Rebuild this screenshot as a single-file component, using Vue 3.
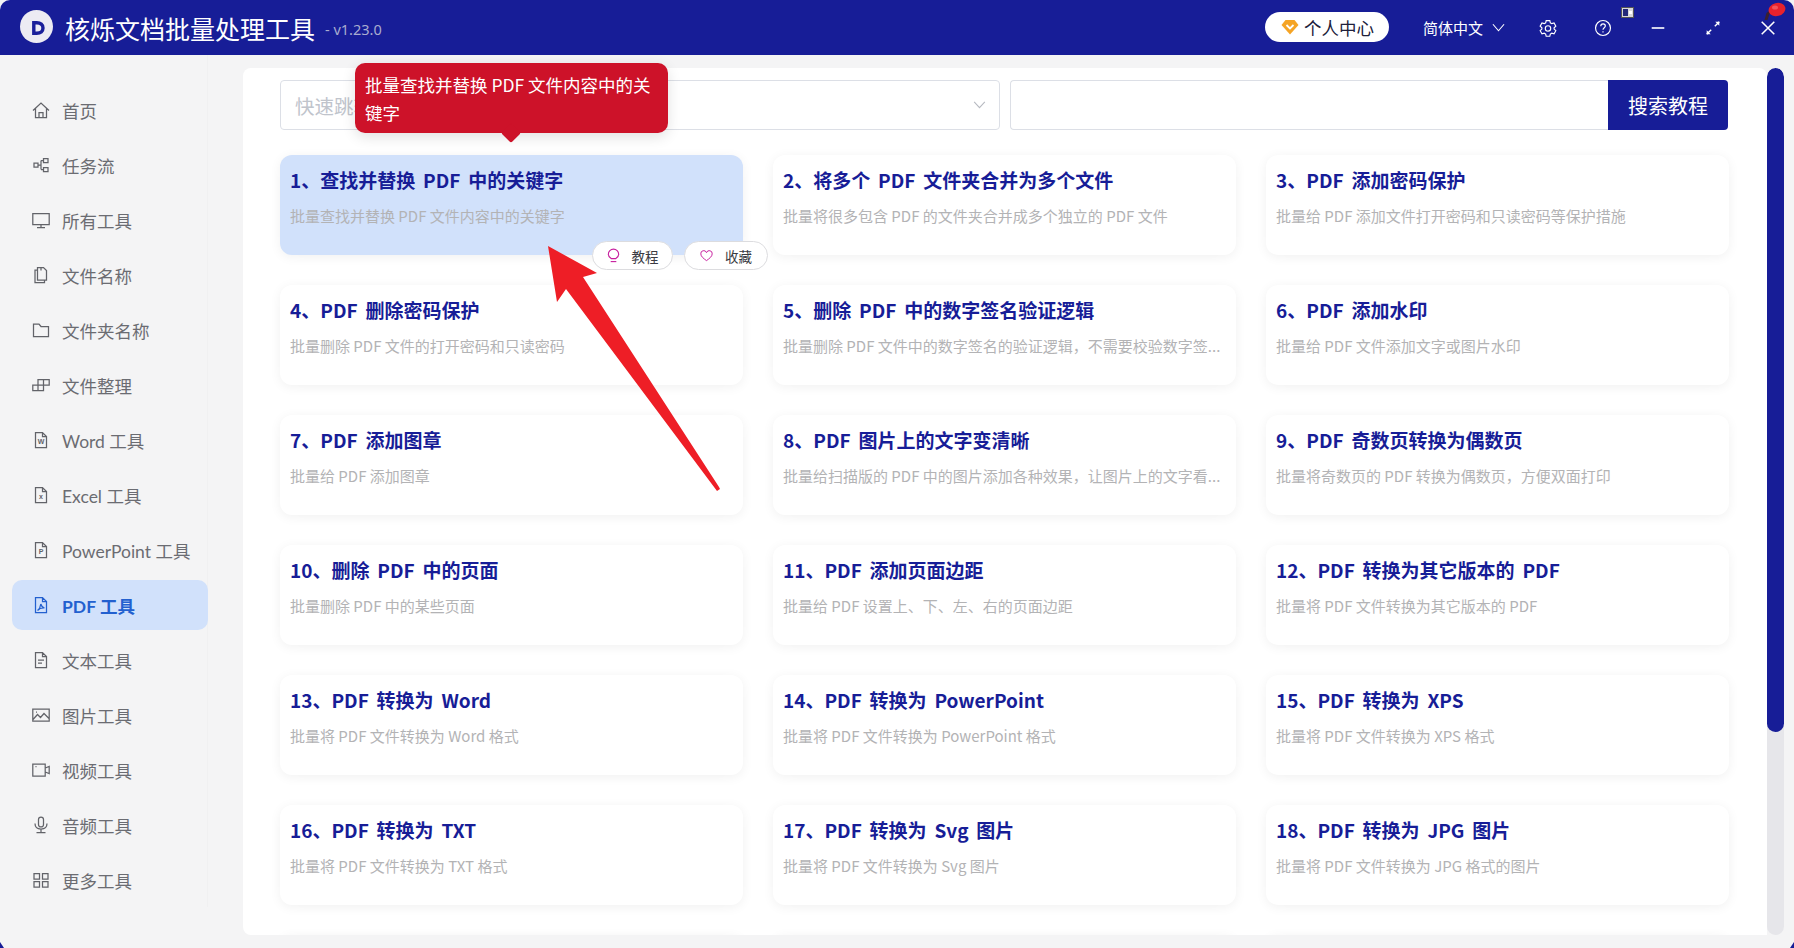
<template>
  <div class="app">
    <!-- 顶部标题栏 -->
    <header class="topbar">
      <svg class="logo" viewBox="0 0 33 33">
        <circle cx="16.5" cy="16.5" r="16.5" fill="#ecebf3" />
        <path d="M13.800 12.700h3c3.800 0 6.200 2 6.200 5.300s-2.400 5.300-6.200 5.300h-3z" fill="none" stroke="#1a1f9a" stroke-width="3.4" />
      </svg>
      <span class="app-name">核烁文档批量处理工具</span>
      <span class="version">- v1.23.0</span>
      <div class="spacer"></div>
      <div class="user-pill">
        <svg class="gem" viewBox="0 0 18 16">
          <path d="M4.500 1h9L17.500 6 9 15.500.5 6z" fill="#f5a425" />
          <path d="M5.500 6 9 9.500 12.500 6" fill="none" stroke="#fff" stroke-width="1.800" />
        </svg>
        <span>个人中心</span>
      </div>
      <div class="lang">
        <span>简体中文</span>
        <svg viewBox="0 0 14 9" class="lang-arrow"><path d="M1 1l6 7 6-7" /></svg>
      </div>
      <button class="bar-btn">
        <svg viewBox="0 0 20 20">
          <path d="M8 1.800h4l.6 2.500 1.600.9 2.500-.7 2 3.500-1.900 1.800v1.400l1.900 1.800-2 3.500-2.500-.7-1.600.9-.6 2.500H8l-.6-2.500-1.600-.9-2.500.7-2-3.500 1.900-1.800V9.800L1.300 8l2-3.500 2.500.7 1.600-.9z" />
          <circle cx="10" cy="10.500" r="3" />
        </svg>
      </button>
      <button class="bar-btn">
        <svg viewBox="0 0 20 20">
          <circle cx="10" cy="10" r="8.300" />
          <path d="M7.500 8c0-1.600 1.100-2.600 2.600-2.600S12.600 6.400 12.600 7.800c0 1.900-2.600 2-2.600 4.200M10 13.700v1.300" />
        </svg>
      </button>
      <button class="bar-btn">
        <svg viewBox="0 0 20 20"><path d="M3 10h14" stroke-width="1.800" /></svg>
      </button>
      <button class="bar-btn">
        <svg viewBox="0 0 20 20">
          <path d="M3 17l5-5M12 8l5-5" stroke-width="1.600" />
          <path d="M3 12.500V17h4.500zM17 7.500V3h-4.500z" fill="#fff" stroke="none" />
        </svg>
      </button>
      <button class="bar-btn">
        <svg viewBox="0 0 20 20"><path d="M3 3l14 14M17 3L3 17" stroke-width="1.700" /></svg>
      </button>
    </header>

    <div class="content">
      <!-- 左侧菜单 -->
      <aside class="sidebar">
        <div
          v-for="item in menu"
          :key="item.label"
          class="menu-item"
          :class="{ active: item.active }"
        >
          <svg class="menu-icon" viewBox="0 0 18 18">
            <path :d="item.icon" />
            <text v-if="item.letter" x="9" y="13.300" class="icon-letter">{{ item.letter }}</text>
          </svg>
          <span>{{ item.label }}</span>
        </div>
      </aside>

      <main class="panel">
        <div class="panel-body">
          <div class="search-row">
            <div class="jump-select">
              <span>快速跳转到工具</span>
              <svg viewBox="0 0 14 9"><path d="M1 1l6 6.500L13 1" /></svg>
            </div>
            <div class="search-box">
              <div class="search-input"></div>
              <button class="search-btn">搜索教程</button>
            </div>
          </div>

          <div class="card-grid">
            <div
              v-for="(card, i) in cards"
              :key="i"
              class="card"
              :class="{ current: i === 0 }"
            >
              <div class="card-title">{{ card.title }}</div>
              <div class="card-desc">{{ card.desc }}</div>
              <div v-if="i === 0" class="card-actions">
                <div class="chip tutorial">
                  <svg viewBox="0 0 13 16">
                    <path d="M4 11.300C2.300 10.300 1 8.800 1 6.700a5.500 5.500 0 0111 0c0 2.100-1.300 3.600-3 4.600z" />
                    <path d="M3.500 14.500h6" />
                  </svg>
                  <span>教程</span>
                </div>
                <div class="chip favorite">
                  <svg viewBox="0 0 16 15">
                    <path d="M8 13.800C4.500 11.300 1 8.700 1 5.500A3.600 3.600 0 018 4a3.600 3.600 0 017 1.500c0 3.200-3.500 5.800-7 8.300z" />
                  </svg>
                  <span>收藏</span>
                </div>
              </div>
            </div>
          </div>
        </div>
        <div class="scroll-track"><div class="scroll-thumb"></div></div>
      </main>
    </div>

    <!-- 悬浮提示 -->
    <div class="tooltip">批量查找并替换 PDF 文件内容中的关键字</div>

    <!-- 标注箭头 -->
    <svg class="annot-arrow" viewBox="0 0 1794 948">
      <path d="M548 246L597 273L583 277L719 487L720 489L717 491L566 289L557 302Z" fill="#ee1e26" />
    </svg>

    <!-- 角落的小图标 -->
    <svg class="tray-win" viewBox="0 0 13 11">
      <rect x=".5" y=".5" width="12" height="10" fill="#d8d8dc" stroke="#555" />
      <rect x="2" y="2" width="5" height="7" fill="#23287a" />
      <rect x="8" y="4" width="3" height="3" fill="#fff" />
    </svg>
    <svg class="tray-pin" viewBox="0 0 24 20">
      <path d="M1.500 19l2-7 4-3 2 3-3 1-2 6z" fill="#3a2030" />
      <ellipse cx="14" cy="8.500" rx="8.500" ry="6.500" fill="#e8222c" transform="rotate(-15 14 8.500)" />
      <ellipse cx="12" cy="6.500" rx="3" ry="2" fill="#f4545a" />
    </svg>
    <i class="corner left"></i>
    <i class="corner right"></i>
  </div>
</template>

<script setup>
const docIcon = 'M3.500 1.500h7l4 4v11h-11zM10.500 1.500v4h4'

const menu = [
  { label: '首页', icon: 'M1 9.500L9 2l8 7.500M3.500 7.500v9h11v-9M7 16.500v-5h4v5' },
  { label: '任务流', icon: 'M2 7h4v4H2zM11.500 2.500H16v4h-4.500zM11.500 11.500H16v4h-4.500zM6 9h3M9 4.500v9M9 4.500h2.500M9 13.500h2.500' },
  { label: '所有工具', icon: 'M.8 2.500h16.400v11H.8zM9 13.500v3M5 16.500h8' },
  { label: '文件名称', icon: 'M5.500 4H3v12.500h9.500V14M5.500 1.500h6l3 3v9.500h-9zM9 1.500v3' },
  { label: '文件夹名称', icon: 'M1.500 3h5.500l2 2.500h7.500v10h-15z' },
  { label: '文件整理', icon: 'M.8 9h5.200v5.500H.8zM6 9h5.500v5.500H6zM6 9V3.500h5.500V9M11.500 3.500h5.700V9h-5.700' },
  { label: 'Word 工具', icon: docIcon, letter: 'W' },
  { label: 'Excel 工具', icon: docIcon, letter: 'x' },
  { label: 'PowerPoint 工具', icon: docIcon, letter: 'P' },
  { label: 'PDF 工具', icon: docIcon + 'M5.500 14.500c2-1.500 3-4 3.300-6.500.6 2.500 2 3.500 3.700 4-2.500-.3-5 .5-7 2.500', active: true },
  { label: '文本工具', icon: docIcon + 'M6 9h6M6 12h4' },
  { label: '图片工具', icon: 'M.8 3h16.400v12H.8zM1 13.500l4.500-5 3 3 3.500-4 5 5M4 6h1' },
  { label: '视频工具', icon: 'M.8 3h12.400v12H.8zM13.200 7l4-1.500v7l-4-1.500M3.500 5.500h1' },
  { label: '音频工具', icon: 'M6.500 3.500a2.500 2.500 0 015 0v5a2.500 2.500 0 01-5 0zM3 7.500c0 3.500 2.500 5.500 6 5.500s6-2 6-5.500M9 13v3.500M4.500 16.500h9' },
  { label: '更多工具', icon: 'M2 2.500h5.500V8H2zM10.500 2.500H16V8h-5.500zM2 10.500h5.500V16H2zM10.500 10.500H16V16h-5.500z' },
]

const cards = [
  { title: '1、查找并替换 PDF 中的关键字', desc: '批量查找并替换 PDF 文件内容中的关键字' },
  { title: '2、将多个 PDF 文件夹合并为多个文件', desc: '批量将很多包含 PDF 的文件夹合并成多个独立的 PDF 文件' },
  { title: '3、PDF 添加密码保护', desc: '批量给 PDF 添加文件打开密码和只读密码等保护措施' },
  { title: '4、PDF 删除密码保护', desc: '批量删除 PDF 文件的打开密码和只读密码' },
  { title: '5、删除 PDF 中的数字签名验证逻辑', desc: '批量删除 PDF 文件中的数字签名的验证逻辑，不需要校验数字签...' },
  { title: '6、PDF 添加水印', desc: '批量给 PDF 文件添加文字或图片水印' },
  { title: '7、PDF 添加图章', desc: '批量给 PDF 添加图章' },
  { title: '8、PDF 图片上的文字变清晰', desc: '批量给扫描版的 PDF 中的图片添加各种效果，让图片上的文字看...' },
  { title: '9、PDF 奇数页转换为偶数页', desc: '批量将奇数页的 PDF 转换为偶数页，方便双面打印' },
  { title: '10、删除 PDF 中的页面', desc: '批量删除 PDF 中的某些页面' },
  { title: '11、PDF 添加页面边距', desc: '批量给 PDF 设置上、下、左、右的页面边距' },
  { title: '12、PDF 转换为其它版本的 PDF', desc: '批量将 PDF 文件转换为其它版本的 PDF' },
  { title: '13、PDF 转换为 Word', desc: '批量将 PDF 文件转换为 Word 格式' },
  { title: '14、PDF 转换为 PowerPoint', desc: '批量将 PDF 文件转换为 PowerPoint 格式' },
  { title: '15、PDF 转换为 XPS', desc: '批量将 PDF 文件转换为 XPS 格式' },
  { title: '16、PDF 转换为 TXT', desc: '批量将 PDF 文件转换为 TXT 格式' },
  { title: '17、PDF 转换为 Svg 图片', desc: '批量将 PDF 文件转换为 Svg 图片' },
  { title: '18、PDF 转换为 JPG 图片', desc: '批量将 PDF 文件转换为 JPG 格式的图片' },
  // 下一行只露出阴影
  { title: '', desc: '' },
  { title: '', desc: '' },
  { title: '', desc: '' },
]
</script>

<style>
html, body {
  margin: 0;
  background: #fff;
}
</style>

<style scoped>
.app {
  position: relative;
  width: 1794px;
  height: 948px;
  overflow: hidden;
  display: flex;
  flex-direction: column;
  background: #f4f4f5;
  font-family: "Noto Sans CJK SC", "Noto Sans", sans-serif;
}

.topbar {
  height: 55px;
  flex-shrink: 0;
  display: flex;
  align-items: center;
  background: #171d97;
  border-radius: 10px 10px 0 0;
  padding-left: 20px;
  padding-right: 0;
  color: #fff;
}

.logo {
  width: 33px;
  height: 33px;
  flex-shrink: 0;
  margin-top: -2px;
}

.app-name {
  margin-left: 12px;
  font-size: 25px;
  line-height: 34px;
}

.version {
  margin-left: 10px;
  margin-top: 2px;
  font-size: 14.500px;
  color: #a9accf;
  font-family: "Noto Sans", sans-serif;
}

.spacer {
  flex: 1;
}

.user-pill {
  width: 124px;
  height: 30px;
  margin-top: -1px;
  box-sizing: border-box;
  padding-left: 16px;
  display: flex;
  align-items: center;
  gap: 5px;
  border-radius: 15px;
  background: #fff;
  color: #20203a;
  font-size: 17.5px;
}

.gem {
  width: 18px;
  height: 16px;
}

.lang {
  margin-left: 34px;
  margin-right: 14px;
  display: flex;
  align-items: center;
  gap: 9px;
  font-size: 15px;
}

.lang-arrow {
  width: 13px;
  height: 9px;
  fill: none;
  stroke: #fff;
  stroke-width: 1.2;
}

.bar-btn {
  width: 55px;
  height: 55px;
  flex-shrink: 0;
  padding: 0;
  border: 0;
  background: none;
  display: flex;
  align-items: center;
  justify-content: center;
  position: relative;
  left: 1px;
}

.bar-btn svg {
  width: 18px;
  height: 18px;
  fill: none;
  stroke: #fff;
  stroke-width: 1.3;
}

.content {
  flex: 1;
  display: flex;
  min-height: 0;
}

.sidebar {
  width: 208px;
  flex-shrink: 0;
  box-sizing: border-box;
  height: 852px;
  padding-top: 30px;
  padding-left: 12px;
  display: flex;
  flex-direction: column;
  gap: 5px;
  border-right: 1px solid #f0f0f1;
  font-family: Lato, "Noto Sans CJK SC", sans-serif;
}

.menu-item {
  height: 50px;
  flex-shrink: 0;
  display: flex;
  align-items: center;
  gap: 12px;
  padding-left: 20px;
  border-radius: 10px;
  color: #6b6c72;
  font-size: 17.5px;
}

.menu-item.active {
  width: 196px;
  box-sizing: border-box;
  background: #d1e1fb;
  color: #2360cf;
  font-weight: 700;
}

.menu-icon {
  width: 18px;
  height: 18px;
  flex-shrink: 0;
  fill: none;
  stroke: #626369;
  stroke-width: 1.250;
}

.active .menu-icon {
  stroke: #2360cf;
}

.icon-letter {
  font-family: "Liberation Sans", sans-serif;
  font-size: 7px;
  font-weight: 700;
  text-anchor: middle;
  fill: #626369;
  stroke: none;
}

.panel {
  width: 1541px;
  height: 867px;
  margin-top: 13px;
  margin-left: 35px;
  display: flex;
}

.panel-body {
  flex: 1;
  min-width: 0;
  overflow: hidden;
  box-sizing: border-box;
  padding: 12px 38px 0 37px;
  background: #fff;
  border-radius: 8px 8px 0 8px;
}

.search-row {
  display: flex;
  gap: 10px;
  height: 50px;
  margin-right: 1px;
  margin-bottom: 25px;
}

.jump-select {
  width: 720px;
  box-sizing: border-box;
  padding: 0 13px 0 14px;
  display: flex;
  align-items: center;
  justify-content: space-between;
  border: 1px solid #dcdfe6;
  border-radius: 4px;
  color: #c0c4cc;
  font-size: 19.500px;
}

.jump-select svg {
  width: 13px;
  height: 8px;
  fill: none;
  stroke: #b6b9c0;
  stroke-width: 1.200;
}

.search-box {
  flex: 1;
  display: flex;
}

.search-input {
  flex: 1;
  border: 1px solid #dcdfe6;
  border-right: 0;
  border-radius: 4px 0 0 4px;
}

.search-btn {
  width: 120px;
  border: 0;
  padding: 0;
  border-radius: 0 4px 4px 0;
  background: #171d97;
  color: #fff;
  font-family: inherit;
  font-size: 20px;
}

.card-grid {
  display: grid;
  grid-template-columns: repeat(3, 463px);
  grid-auto-rows: 100px;
  gap: 30px;
}

.card {
  position: relative;
  box-sizing: border-box;
  padding: 11px 10px 0;
  border-radius: 12px;
  background: #fff;
  box-shadow: 0 2px 12px rgba(0, 0, 0, 0.06);
}

.card.current {
  background: #d1e1fb;
}

.card-title {
  height: 28px;
  line-height: 28px;
  font-size: 19px;
  font-weight: 700;
  word-spacing: 3.5px;
  color: #171d97;
  white-space: nowrap;
}

.card-desc {
  margin-top: 12px;
  line-height: 20px;
  font-size: 15px;
  color: #b3b3b5;
  white-space: nowrap;
}

.card-actions {
  position: absolute;
  top: 86px;
  left: 312px;
  display: flex;
  gap: 11px;
}

.chip {
  height: 29px;
  box-sizing: border-box;
  display: flex;
  align-items: center;
  justify-content: center;
  gap: 12px;
  border: 1px solid #dcdcdf;
  border-radius: 15px;
  background: #fff;
  color: #3a3a42;
  font-size: 13.500px;
  white-space: nowrap;
}

.chip.tutorial {
  width: 81px;
}

.chip.favorite {
  width: 84px;
}

.chip svg {
  width: 13px;
  height: 15px;
  flex-shrink: 0;
  fill: none;
  stroke: #c71f9e;
  stroke-width: 1.200;
}

.scroll-track {
  width: 17px;
  flex-shrink: 0;
  height: 100%;
  border-radius: 9px;
  background: #e6e6ea;
  overflow: hidden;
}

.scroll-thumb {
  height: 664px;
  border-radius: 9px;
  background: #171d97;
}

.tooltip {
  position: absolute;
  left: 355px;
  top: 63px;
  width: 313px;
  height: 70px;
  box-sizing: border-box;
  padding: 8px 10px;
  border-radius: 10px;
  background: #cd1229;
  color: #fff;
  font-size: 17.500px;
  line-height: 28px;
  box-shadow: 0 4px 14px rgba(0, 0, 0, 0.12);
}

.tooltip::after {
  content: "";
  position: absolute;
  left: 149px;
  top: 63px;
  width: 14px;
  height: 14px;
  background: #cd1229;
  border-radius: 2px;
  transform: rotate(45deg);
}

.annot-arrow {
  position: absolute;
  left: 0;
  top: 0;
  width: 1794px;
  height: 948px;
  pointer-events: none;
}

.tray-win {
  position: absolute;
  left: 1621px;
  top: 7px;
  width: 13px;
  height: 11px;
}

.tray-pin {
  position: absolute;
  left: 1763px;
  top: 1px;
  width: 24px;
  height: 20px;
}

.corner {
  position: absolute;
  bottom: 0;
  width: 0;
  height: 0;
  border-bottom: 6px solid #171d97;
}

.corner.left {
  left: 0;
  border-right: 4px solid transparent;
}

.corner.right {
  right: 0;
  border-left: 4px solid transparent;
}
</style>
